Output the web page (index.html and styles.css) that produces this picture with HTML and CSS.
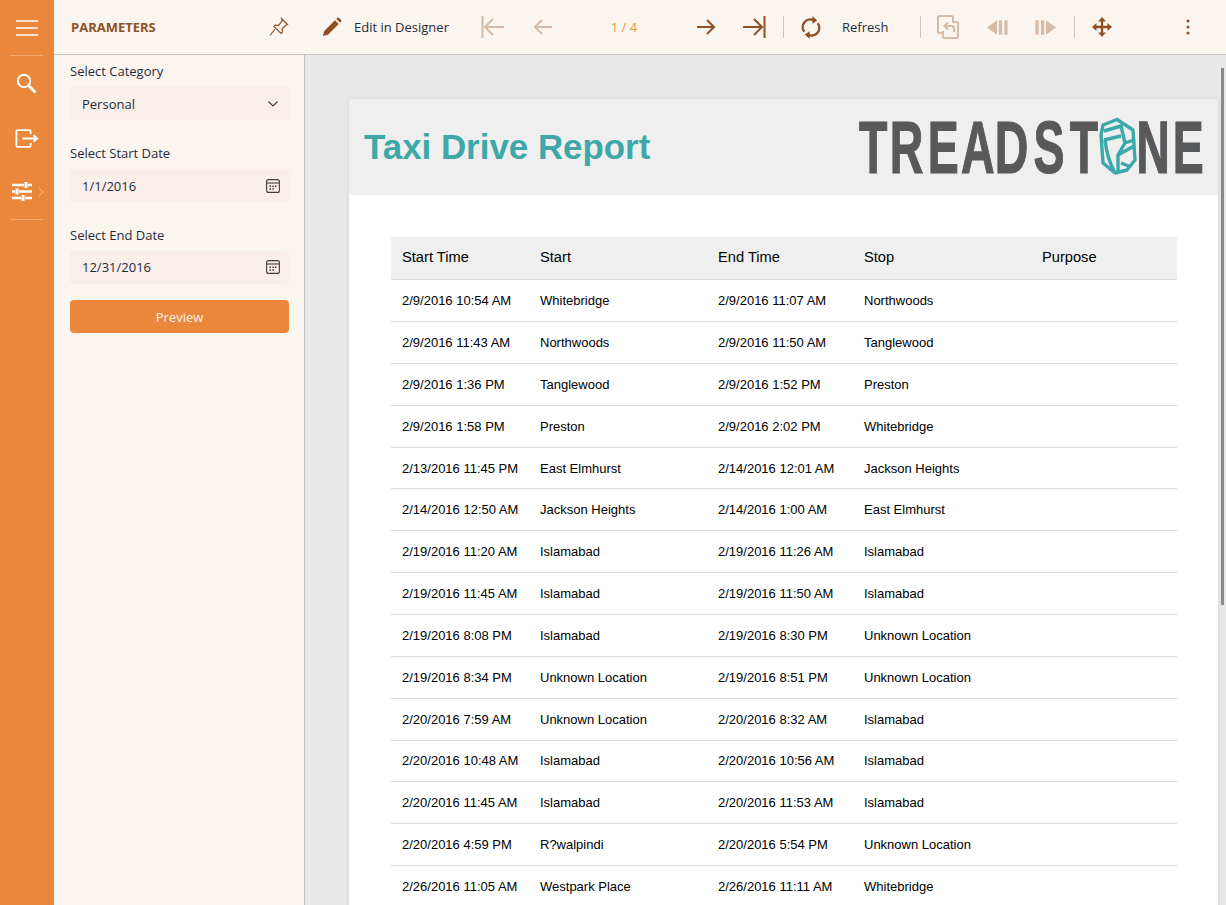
FILE: index.html
```html
<!DOCTYPE html>
<html lang="en">
<head>
<meta charset="utf-8">
<title>Taxi Drive Report</title>
<link rel="stylesheet" href="styles.css">
</head>
<body>
<nav class="rail">
  <div class="rail-item rail-menu"><svg width="24" height="18" viewBox="0 0 24 18"><path d="M1 2h22M1 9h22M1 16h22" class="w15"/></svg></div>
  <div class="rail-item rail-search"><svg width="24" height="24" viewBox="0 0 24 24"><circle cx="10" cy="10" r="6.200" class="w2"/><path d="M14.500 14.500l7 7" class="w25"/></svg></div>
  <div class="rail-item rail-export"><svg width="24" height="19" viewBox="0 0 26 20"><path d="M17 5V2.500A1.500 1.500 0 0 0 15.500 1H3A1.500 1.500 0 0 0 1.500 2.500v15A1.500 1.500 0 0 0 3 19h12.500a1.500 1.500 0 0 0 1.500-1.500V15" class="w2"/><path d="M8 10h15M20 6.500l4 3.500-4 3.500" class="w2"/></svg></div>
  <div class="rail-item rail-params">
    <svg width="20" height="19" viewBox="0 0 20 19"><path d="M0 3h12M16 3h4M0 9.500h3M7 9.500h13M0 16h9M13 16h7" class="w25t"/><path d="M14 0v6M5 6.500v6M11 13v6" class="w3"/></svg>
    <svg class="rail-caret" width="6" height="10" viewBox="0 0 6 10"><path d="M1 1l4 4-4 4" class="w1"/></svg>
  </div>
</nav>
<div class="shell">
  <header class="topbar">
    <div class="panel-head">
      <span class="panel-title">PARAMETERS</span>
      <svg class="pin" width="20" height="20" viewBox="0 0 20 20"><path d="M12.500 1.500l6 6-1.500.5-4 4 .5 3-1.500 1.500-7-7 1.500-1.500 3 .5 3.500-4.500zM6 12l-5 6.500" class="ink1"/></svg>
    </div>
    <div class="toolbar">
      <div class="tool"><svg width="20" height="20" viewBox="0 0 20 20"><path d="M1 19l1.200-5L13 3.200l3.800 3.800L6 17.800zM14.300 1.900l1.200-1.100a1 1 0 0 1 1.400 0l2.300 2.300a1 1 0 0 1 0 1.400l-1.100 1.200z" class="fill"/></svg></div>
      <span class="tool-label label-edit">Edit in Designer</span>
      <div class="tool off"><svg class="nudge" width="24" height="24" viewBox="0 0 24 24"><path d="M1.500 1v22M23 12H4M12 4l-8 8 8 8" class="ink2"/></svg></div>
      <div class="tool off tool-prev"><svg width="20" height="18" viewBox="0 0 20 18"><path d="M19 9H2M9 2L2 9l7 7" class="ink2"/></svg></div>
      <span class="pager">1 / 4</span>
      <div class="tool tool-next"><svg width="20" height="18" viewBox="0 0 20 18"><path d="M1 9h17M11 2l7 7-7 7" class="ink2"/></svg></div>
      <div class="tool"><svg width="24" height="24" viewBox="0 0 24 24"><path d="M22.500 1v22M1 12h19M12 4l8 8-8 8" class="ink2"/></svg></div>
      <i class="sep sep-first"></i>
      <div class="tool"><svg width="20" height="23" viewBox="0 0 20 24"><path d="M3 16.500A8 8 0 0 1 13 4.500M17 7.500A8 8 0 0 1 7 19.500" class="ink25"/><path d="M11.500 0l5 4.700-5 3.300zM8.500 24l-5-4.700 5-3.300z" class="fill"/></svg></div>
      <span class="tool-label label-refresh">Refresh</span>
      <i class="sep"></i>
      <div class="tool off"><svg width="22" height="24" viewBox="0 0 22 24"><path d="M16 6V2.500A1.500 1.500 0 0 0 14.500 1H2.500A1.500 1.500 0 0 0 1 2.500V16.500A1.500 1.500 0 0 0 2.500 18H6" class="ink2"/><path d="M15 7h4.500A1.500 1.500 0 0 1 21 8.500V21.500A1.500 1.500 0 0 1 19.500 23H7.500A1.500 1.500 0 0 1 6 21.500V16" class="ink2"/><path d="M7.500 11H14.500A2.500 2.500 0 0 1 17 13.500V17M11 7.500L7.500 11l3.500 3.500" class="ink2"/></svg></div>
      <div class="tool off tool-next"><svg width="22" height="17" viewBox="0 0 24 18"><path d="M12 1v16L1 9zM14 1h3.500v16H14zM20 1h3.500v16H20z" class="fill"/></svg></div>
      <div class="tool off tool-next"><svg width="22" height="17" viewBox="0 0 24 18"><path d="M12 1v16l11-8zM.5 1H4v16H.5zM6.500 1H10v16H6.500z" class="fill"/></svg></div>
      <i class="sep"></i>
      <div class="tool"><svg width="22" height="22" viewBox="0 0 24 24"><path d="M12 4v16M4 12h16" class="ink25"/><path d="M12 1l4.300 5H7.700zM12 23l-4.300-5h8.600zM1 12l5-4.300v8.600zM23 12l-5 4.300V7.700z" class="fill"/></svg></div>
      <div class="tool tool-more"><svg width="4" height="16" viewBox="0 0 4 16"><circle cx="2" cy="2" r="1.500" class="fill"/><circle cx="2" cy="8" r="1.500" class="fill"/><circle cx="2" cy="14" r="1.500" class="fill"/></svg></div>
    </div>
  </header>
  <div class="body">
    <aside class="panel">
      <label class="field-label">Select Category</label>
      <div class="field">Personal<svg class="chev" width="10" height="6" viewBox="0 0 10 6"><path d="M.5.500L5 5 9.500.500" class="dark"/></svg></div>
      <label class="field-label">Select Start Date</label>
      <div class="field">1/1/2016<svg class="cal" width="14" height="14" viewBox="0 0 14 14"><rect x=".6" y=".6" width="12.800" height="12.800" rx="2" class="dark"/><path d="M1 4h12" class="dark"/><path d="M3.500 6.500h1.500V8H3.500zM6.300 6.500h1.500V8H6.300zM9 6.500h1.500V8H9zM3.500 9.300h1.500v1.500H3.500zM6.300 9.300h1.500v1.500H6.300z" class="darkfill"/></svg></div>
      <label class="field-label">Select End Date</label>
      <div class="field field-last">12/31/2016<svg class="cal" width="14" height="14" viewBox="0 0 14 14"><rect x=".6" y=".6" width="12.800" height="12.800" rx="2" class="dark"/><path d="M1 4h12" class="dark"/><path d="M3.500 6.500h1.500V8H3.500zM6.300 6.500h1.500V8H6.300zM9 6.500h1.500V8H9zM3.500 9.300h1.500v1.500H3.500zM6.300 9.300h1.500v1.500H6.300z" class="darkfill"/></svg></div>
      <button class="preview" type="button">Preview</button>
    </aside>
    <main class="viewer">
      <article class="sheet">
        <div class="sheet-head">
          <h1 class="report-title">Taxi Drive Report</h1>
          <svg class="logo" width="344" height="56" viewBox="0 0 344 56" role="img" aria-label="Treadstone">
            <text class="logo-text" transform="scale(.62 1)" y="54.500" x="0 49.700 111 164.500 219 281.500 340">TREADST</text>
            <path class="logo-gem" d="M258 1.500L274 12l2 30-8 10-12 3-12-10-2-28 2-10zM245 13l17-5 4 17-7 12v18M245 22l17-4M246 22q2 18 10 33M266 25l9-3M259 37l16-9M262 45l10 4"/>
            <text class="logo-text" transform="scale(.62 1)" y="54.500" x="447 506">NE</text>
          </svg>
        </div>
        <div class="report">
          <div class="row row-head"><span>Start Time</span><span>Start</span><span>End Time</span><span>Stop</span><span>Purpose</span></div>
          <div class="row"><span>2/9/2016 10:54 AM</span><span>Whitebridge</span><span>2/9/2016 11:07 AM</span><span>Northwoods</span><span></span></div>
          <div class="row"><span>2/9/2016 11:43 AM</span><span>Northwoods</span><span>2/9/2016 11:50 AM</span><span>Tanglewood</span><span></span></div>
          <div class="row"><span>2/9/2016 1:36 PM</span><span>Tanglewood</span><span>2/9/2016 1:52 PM</span><span>Preston</span><span></span></div>
          <div class="row"><span>2/9/2016 1:58 PM</span><span>Preston</span><span>2/9/2016 2:02 PM</span><span>Whitebridge</span><span></span></div>
          <div class="row"><span>2/13/2016 11:45 PM</span><span>East Elmhurst</span><span>2/14/2016 12:01 AM</span><span>Jackson Heights</span><span></span></div>
          <div class="row"><span>2/14/2016 12:50 AM</span><span>Jackson Heights</span><span>2/14/2016 1:00 AM</span><span>East Elmhurst</span><span></span></div>
          <div class="row"><span>2/19/2016 11:20 AM</span><span>Islamabad</span><span>2/19/2016 11:26 AM</span><span>Islamabad</span><span></span></div>
          <div class="row"><span>2/19/2016 11:45 AM</span><span>Islamabad</span><span>2/19/2016 11:50 AM</span><span>Islamabad</span><span></span></div>
          <div class="row"><span>2/19/2016 8:08 PM</span><span>Islamabad</span><span>2/19/2016 8:30 PM</span><span>Unknown Location</span><span></span></div>
          <div class="row"><span>2/19/2016 8:34 PM</span><span>Unknown Location</span><span>2/19/2016 8:51 PM</span><span>Unknown Location</span><span></span></div>
          <div class="row"><span>2/20/2016 7:59 AM</span><span>Unknown Location</span><span>2/20/2016 8:32 AM</span><span>Islamabad</span><span></span></div>
          <div class="row"><span>2/20/2016 10:48 AM</span><span>Islamabad</span><span>2/20/2016 10:56 AM</span><span>Islamabad</span><span></span></div>
          <div class="row"><span>2/20/2016 11:45 AM</span><span>Islamabad</span><span>2/20/2016 11:53 AM</span><span>Islamabad</span><span></span></div>
          <div class="row"><span>2/20/2016 4:59 PM</span><span>R?walpindi</span><span>2/20/2016 5:54 PM</span><span>Unknown Location</span><span></span></div>
          <div class="row"><span>2/26/2016 11:05 AM</span><span>Westpark Place</span><span>2/26/2016 11:11 AM</span><span>Whitebridge</span><span></span></div>
        </div>
      </article>
      <div class="scroll-thumb"></div>
    </main>
  </div>
</div>
</body>
</html>
```

FILE: styles.css
```css
* { box-sizing: border-box; }
html, body { height: 100%; }
body {
  margin: 0;
  display: flex;
  height: 905px;
  overflow: hidden;
  font-family: "Open Sans", sans-serif;
  font-size: 13px;
  color: #1f2c3a;
  background: #fbf5ef;
}
svg { display: block; fill: none; flex: none; }

/* rail */
.rail { width: 54px; flex: none; background: #ea873b; display: flex; flex-direction: column; align-items: center; }
.rail svg path, .rail svg circle { stroke: #fff; }
.w1 { stroke-width: 1; opacity: .45; }
.w15 { stroke-width: 1.500; }
.w2 { stroke-width: 2; }
.w25 { stroke-width: 3; }
.w25t { stroke-width: 2.400; }
.w3 { stroke-width: 3; }
.rail-item { width: 54px; display: flex; align-items: center; justify-content: center; }
.rail-menu { height: 56px; padding-bottom: 1px; position: relative; }
.rail-menu::after, .rail-params::after {
  content: ""; position: absolute; left: 10px; right: 11px; bottom: 0; height: 1px; background: #f2ab75;
}
.rail-search { height: 54px; }
.rail-search svg { margin-right: 2px; }
.rail-export { height: 56px; }
.rail-params { height: 54px; position: relative; justify-content: flex-start; padding-left: 12px; padding-bottom: 3px; }
.rail-caret { margin-left: 6px; }

/* top */
.shell { flex: 1; min-width: 0; display: flex; flex-direction: column; }
.topbar { height: 55px; flex: none; display: flex; border-bottom: 1px solid #c5c3c1; background: #fbf5ef; }
.panel-head { width: 251px; flex: none; display: flex; align-items: center; justify-content: space-between; padding: 0 16px 0 17px; }
.panel-title { font-size: 13px; font-weight: 700; color: #8f5123; }
.ink1 { stroke: #8f5123; stroke-width: 1.200; }
.ink2 { stroke: currentColor; stroke-width: 2; }
.ink25 { stroke: currentColor; stroke-width: 2.500; }
.fill { fill: currentColor; }
.toolbar { flex: 1; display: flex; align-items: center; padding-left: 3px; color: #8f5123; }
.tool { width: 48px; height: 40px; flex: none; display: flex; align-items: center; justify-content: center; }
.tool.off { color: #d6bba7; }
.nudge { margin-left: 1px; }
.tool-prev { margin-left: 3px; }
.tool-next { margin-left: 1px; }
.tool-more { margin-left: 38px; }
.tool-label { flex: none; color: #1f2c3a; font-size: 13px; }
.label-edit { width: 114px; margin-left: -2px; }
.label-refresh { width: 74px; margin-left: 7px; }
.pager { width: 114px; flex: none; text-align: center; color: #e8963f; font-size: 13px; }
.sep { width: 1px; height: 22px; flex: none; background: #c9c5c1; margin: 0 3px 0 4px; }
.sep-first { margin-left: 5px; }

/* panel */
.body { flex: 1; display: flex; min-height: 0; }
.panel { width: 251px; flex: none; padding: 8px 15px 0 16px; border-right: 1px solid #c5c3c1; background: #fbf5ef; display: flex; flex-direction: column; }
.field-label { height: 16px; line-height: 16px; font-size: 13px; color: #1f2c3a; margin-bottom: 8px; }
.field {
  height: 33px; margin-bottom: 25px; padding: 0 9px 0 12px; border-radius: 4px; background: #f8eeea;
  display: flex; align-items: center; justify-content: space-between; font-size: 13px; color: #1f2c3a;
}
.chev { margin-right: 2px; }
.dark { stroke: #3f3f3f; stroke-width: 1.100; }
.darkfill { fill: #3f3f3f; }
.field-last { margin-bottom: 16px; padding-bottom: 1px; }
.preview {
  height: 33px; width: 100%; border: 0; border-radius: 4px; background: #ea873b; color: #fdf3ea;
  font-family: "Open Sans", sans-serif; font-size: 13px; padding: 0;
}

/* viewer */
.viewer { flex: 1; min-width: 0; position: relative; overflow: hidden; background: #e9e9e9; padding: 44px 0 0 44px; }
.sheet { width: 869px; background: #fff; box-shadow: 0 0 5px rgba(0,0,0,.1); min-height: 900px; font-family: "Liberation Sans", Arial, sans-serif; color: #000; }
.sheet-head { height: 96px; background: #efefef; display: flex; align-items: center; justify-content: space-between; padding: 0 15px; }
.report-title { margin: 0; font-size: 34.900px; font-weight: 700; color: #3ea8a9; }
.logo { margin-bottom: 2px; overflow: visible; }
.logo-text { font-family: "Liberation Sans", Arial, sans-serif; font-weight: 700; font-size: 75px; fill: #58595b; stroke: #58595b; stroke-width: 1.200; }
.logo-gem { stroke: #3aa9aa; stroke-width: 3.400; stroke-linejoin: round; }
.report { margin: 42px 41px 0 42px; }
.row {
  display: grid; grid-template-columns: 138px 178px 146px 178px 1fr; align-items: center;
  height: 41.850px; padding-left: 11px; font-size: 13px; border-bottom: 1px solid #dcdcdc;
}
.row-head { height: 43.250px; padding-bottom: 2px; background: #efefef; font-size: 14.670px; border-bottom: 1px solid #d9d9d9; }
.scroll-thumb { position: absolute; top: 13px; right: 2px; width: 3px; height: 537px; background: #8a8a8a; }
```
